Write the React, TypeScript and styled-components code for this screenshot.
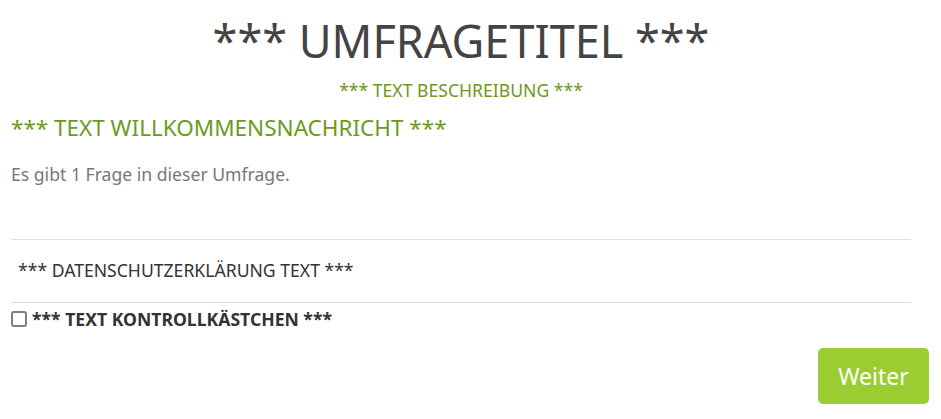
import styled, { createGlobalStyle } from "styled-components";

const GlobalStyle = createGlobalStyle`
  body {
    margin: 0;
    background: #fff;
    font-family: "Noto Sans", "Open Sans", sans-serif;
    color: #333;
  }
`;

const Page = styled.div`
  padding: 14px 12px 0 11px;
  display: flex;
  flex-direction: column;
`;

const Header = styled.div`
  width: 900px;
  text-align: center;
`;

const Title = styled.h1`
  margin: 0;
  font-size: 45px;
  font-weight: 400;
  line-height: 54px;
  color: #444;
`;

const Description = styled.div`
  margin-top: 10px;
  font-size: 17.6px;
  line-height: 24px;
  color: #6c9a1e;
`;

const Welcome = styled.h2`
  margin: 11px 0 0;
  font-size: 22.5px;
  font-weight: 400;
  line-height: 30px;
  color: #6c9a1e;
`;

const Info = styled.p`
  margin: 19px 0 0;
  font-size: 17.6px;
  line-height: 24px;
  color: #777;
`;

const Divider = styled.hr`
  width: 900px;
  margin: 0;
  border: 0;
  border-top: 1px solid #ddd;
`;

const PrivacyText = styled.div<{ $indent?: number }>`
  padding: 18px 0 20px ${(p) => p.$indent ?? 0}px;
  font-size: 17.6px;
  line-height: 24px;
  color: #333;
`;

const CheckRow = styled.label`
  display: flex;
  align-items: center;
  gap: 5px;
  margin-top: 4px;
  font-size: 17.6px;
  line-height: 24px;
  font-weight: 700;
  color: #333;
`;

const Box = styled.span`
  flex-shrink: 0;
  box-sizing: border-box;
  width: 16px;
  height: 16px;
  border: 2px solid #808080;
  border-radius: 3px;
  background: #fff;
`;

const Actions = styled.div`
  display: flex;
  justify-content: flex-end;
  margin-top: 17px;
`;

const Button = styled.button`
  width: 111px;
  height: 56px;
  border: 0;
  border-radius: 5px;
  background: #9acd32;
  color: #fff;
  font-family: inherit;
  font-size: 23px;
  cursor: pointer;
`;

const Spacer = styled.div<{ $h: number }>`
  height: ${(p) => p.$h}px;
`;

export default function App() {
  return (
    <>
      <GlobalStyle />
      <Page>
        <Header>
          <Title>*** UMFRAGETITEL ***</Title>
          <Description>*** TEXT BESCHREIBUNG ***</Description>
        </Header>
        <Welcome>*** TEXT WILLKOMMENSNACHRICHT ***</Welcome>
        <Info>Es gibt 1 Frage in dieser Umfrage.</Info>
        <Spacer $h={53} />
        <Divider />
        <PrivacyText $indent={7}>*** DATENSCHUTZERKLÄRUNG TEXT ***</PrivacyText>
        <Divider />
        <CheckRow>
          <Box />
          *** TEXT KONTROLLKÄSTCHEN ***
        </CheckRow>
        <Actions>
          <Button>Weiter</Button>
        </Actions>
      </Page>
    </>
  );
}
